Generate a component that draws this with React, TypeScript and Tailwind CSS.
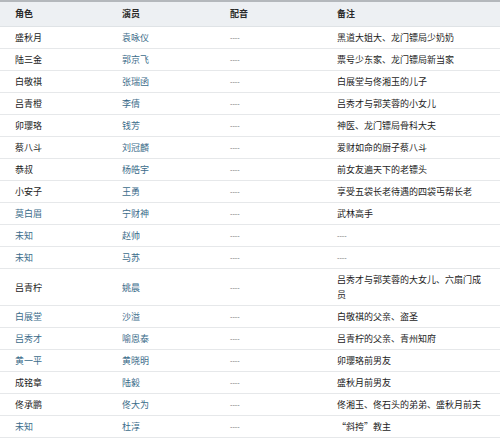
import React from "react";

interface Row {
  role: string;
  roleLink?: boolean;
  actor: string;
  voice: string;
  note: string;
}

const rows: Row[] = [
  { role: "盛秋月", actor: "袁咏仪", voice: "----", note: "黑道大姐大、龙门镖局少奶奶" },
  { role: "陆三金", actor: "郭京飞", voice: "----", note: "票号少东家、龙门镖局新当家" },
  { role: "白敬祺", actor: "张瑞函", voice: "----", note: "白展堂与佟湘玉的儿子" },
  { role: "吕青橙", actor: "李倩", voice: "----", note: "吕秀才与郭芙蓉的小女儿" },
  { role: "卯璎珞", actor: "钱芳", voice: "----", note: "神医、龙门镖局骨科大夫" },
  { role: "蔡八斗", actor: "刘冠麟", voice: "----", note: "爱财如命的厨子蔡八斗" },
  { role: "恭叔", actor: "杨皓宇", voice: "----", note: "前女友遍天下的老镖头" },
  { role: "小安子", actor: "王勇", voice: "----", note: "享受五袋长老待遇的四袋丐帮长老" },
  { role: "莫白眉", roleLink: true, actor: "宁财神", voice: "----", note: "武林高手" },
  { role: "未知", roleLink: true, actor: "赵帅", voice: "----", note: "----" },
  { role: "未知", roleLink: true, actor: "马苏", voice: "----", note: "----" },
  { role: "吕青柠", actor: "姚晨", voice: "----", note: "吕秀才与郭芙蓉的大女儿、六扇门成员" },
  { role: "白展堂", roleLink: true, actor: "沙溢", voice: "----", note: "白敬祺的父亲、盗圣" },
  { role: "吕秀才", roleLink: true, actor: "喻恩泰", voice: "----", note: "吕青柠的父亲、青州知府" },
  { role: "黄一平", roleLink: true, actor: "黄晓明", voice: "----", note: "卯璎珞前男友" },
  { role: "成铭章", actor: "陆毅", voice: "----", note: "盛秋月前男友" },
  { role: "佟承鹏", actor: "佟大为", voice: "----", note: "佟湘玉、佟石头的弟弟、盛秋月前夫" },
  { role: "未知", roleLink: true, actor: "杜淳", voice: "----", note: "“斜挎”教主" },
];

const cell = "px-[15px] py-[3px] leading-[15px] flex items-center";

export default function App() {
  return (
    <div
      className="w-[500px] h-[440px] overflow-hidden bg-white text-[9px] text-[#1c1c1c]"
      style={{ fontFamily: '"Noto Sans CJK SC", "Liberation Sans", sans-serif' }}
    >
      <div className="border-t-2 border-[#b4b8bc] bg-[#edf0f3] border-b border-b-[#dfe3e6] grid grid-cols-[107px_108px_107px_1fr] h-[27px] items-center font-bold text-[#2a2a2a]">
        <div className="px-[15px]">角色</div>
        <div className="px-[15px]">演员</div>
        <div className="px-[15px]">配音</div>
        <div className="px-[15px]">备注</div>
      </div>
      {rows.map((r, i) => (
        <div
          key={i}
          className="grid grid-cols-[107px_108px_107px_1fr] border-b border-[#e6e8ea]"
        >
          <div className={`${cell} ${r.roleLink ? "text-[#3b6c8a]" : ""}`}>{r.role}</div>
          <div className={`${cell} text-[#3b6c8a]`}>{r.actor}</div>
          <div className={`${cell} text-[#666] text-[7px]`}>{r.voice}</div>
          <div className={`${cell} ${r.note === "----" ? "text-[#666] text-[7px]" : ""}`}>{r.note}</div>
        </div>
      ))}
    </div>
  );
}
